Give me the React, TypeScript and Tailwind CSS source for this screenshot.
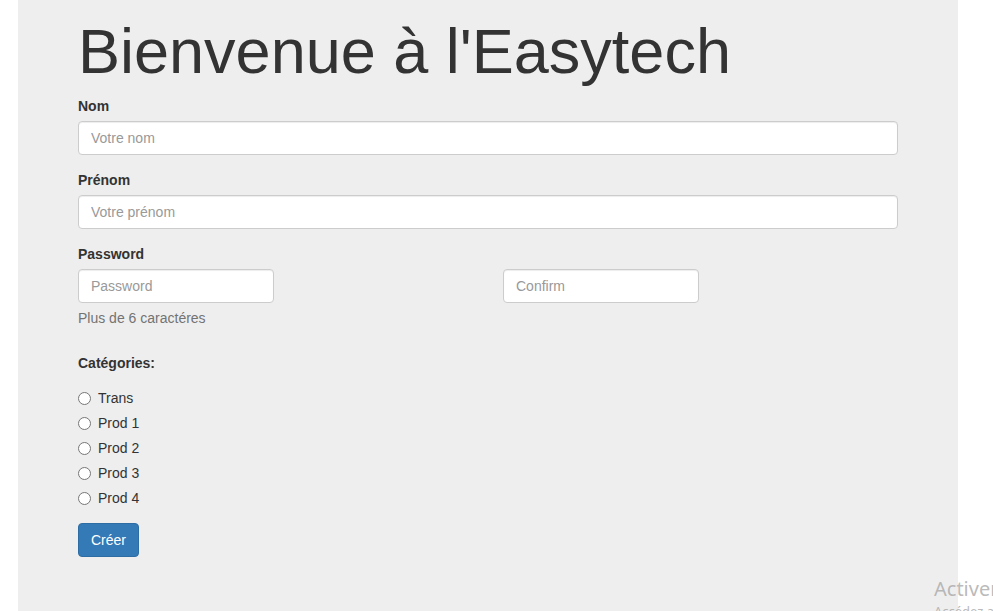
const categories = ["Trans", "Prod 1", "Prod 2", "Prod 3", "Prod 4"];

const inputCls =
  "block h-[34px] px-3 py-1.5 text-[14px] text-[#555] bg-white border border-[#ccc] rounded-[4px] shadow-[inset_0_1px_1px_rgba(0,0,0,0.075)] placeholder:text-[#999] outline-none";

function Label({ children }: { children: React.ReactNode }) {
  return <label className="block font-bold text-[14px] leading-5 mb-[5px]">{children}</label>;
}

export default function App() {
  return (
    <div className="relative min-h-[611px] bg-white font-['Liberation_Sans',Arial,sans-serif] text-[#333] overflow-hidden">
      {/* jumbotron */}
      <div className="ml-[18px] w-[940px] h-[611px] bg-[#eee] px-[60px] pt-[17px]">
        <h1 className="text-[63px] leading-[1.1] mb-[10px]">Bienvenue à l'Easytech</h1>

        <form className="w-[820px]">
          <div className="mb-[15px]">
            <Label>Nom</Label>
            <input className={inputCls + " w-full"} placeholder="Votre nom" />
          </div>

          <div className="mb-[15px]">
            <Label>Prénom</Label>
            <input className={inputCls + " w-full"} placeholder="Votre prénom" />
          </div>

          <div className="mb-[25px]">
            <Label>Password</Label>
            <div className="grid grid-cols-2 gap-[30px]">
              <input type="password" className={inputCls + " w-[196px]"} placeholder="Password" />
              <input type="password" className={inputCls + " w-[196px]"} placeholder="Confirm" />
            </div>
            <p className="text-[14px] leading-5 text-[#737373] mt-[5px] mb-[10px]">Plus de 6 caractéres</p>
          </div>

          <div>
            <Label>Catégories:</Label>
            <div className="flex flex-col gap-[5px] mt-[15px]">
              {categories.map((c) => (
                <label key={c} className="flex items-center h-5 text-[14px] leading-5">
                  <span className="w-[13px] h-[13px] rounded-full border border-[#767676] bg-white mr-[7px]" />
                  {c}
                </label>
              ))}
            </div>
          </div>

          <button
            type="button"
            className="mt-[15px] h-[34px] px-3 text-[14px] text-white bg-[#337ab7] border border-[#2e6da4] rounded-[4px]"
          >
            Créer
          </button>
        </form>
      </div>

      {/* windows activation watermark */}
      <div className="absolute left-[934px] top-[576px] font-['Noto_Sans',sans-serif] text-[#a8a8a8]/80 whitespace-nowrap">
        <div className="text-[20px] leading-[26px]">Activer Windows</div>
        <div className="text-[13px] leading-[18px]">Accédez aux paramètres</div>
      </div>
    </div>
  );
}
